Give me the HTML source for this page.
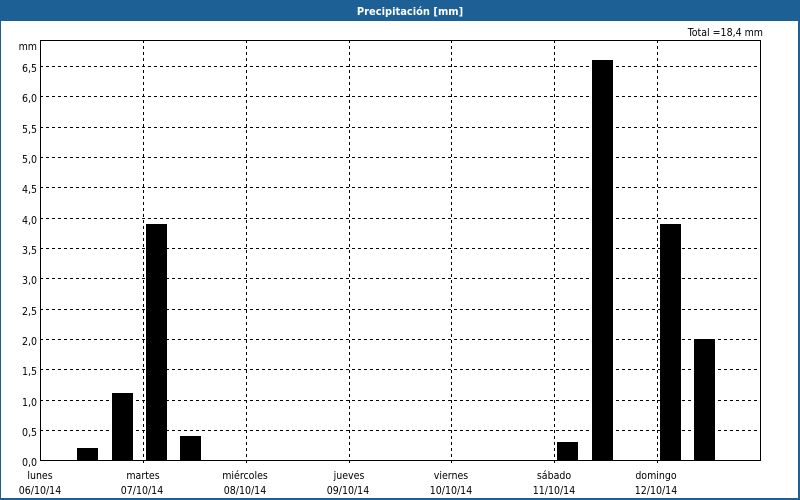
<!DOCTYPE html>
<html><head><meta charset="utf-8"><style>
html,body{margin:0;padding:0;background:#fff;}
svg{display:block;font-family:"DejaVu Sans Condensed","Liberation Sans",sans-serif;}
</style></head><body>
<svg width="800" height="500" viewBox="0 0 800 500" xmlns="http://www.w3.org/2000/svg">
<rect x="0" y="0" width="800" height="500" fill="#1d6096"/>
<rect x="1" y="21" width="797" height="477" fill="#fff"/>
<text x="410" y="15" fill="#fff" font-size="11" font-weight="bold" text-anchor="middle">Precipitación [mm]</text>
<text x="763" y="36" fill="#000" font-size="10.5" text-anchor="end">Total =18,4 mm</text>
<g stroke="#000" stroke-width="1" stroke-dasharray="3,3" fill="none">
<path d="M40 66.5H760M40 96.5H760M40 127.5H760M40 157.5H760M40 187.5H760M40 218.5H760M40 248.5H760M40 278.5H760M40 309.5H760M40 339.5H760M40 369.5H760M40 400.5H760M40 430.5H760"/>
<path d="M143.5 40V464M246.5 40V464M349.5 40V464M451.5 40V464M554.5 40V464M657.5 40V464"/>
</g>
<rect x="40.5" y="40.5" width="720" height="420" fill="none" stroke="#000"/>
<g fill="#000">
<rect x="77" y="448" width="21" height="13"/>
<rect x="112" y="393" width="21" height="68"/>
<rect x="146" y="224" width="21" height="237"/>
<rect x="180" y="436" width="21" height="25"/>
<rect x="557" y="442" width="21" height="19"/>
<rect x="592" y="60" width="21" height="401"/>
<rect x="660" y="224" width="21" height="237"/>
<rect x="694" y="339" width="21" height="122"/>
</g>
<g font-size="10.5" fill="#000" text-anchor="end">
<text x="37" y="50">mm</text>
<text x="37" y="72">6,5</text>
<text x="37" y="102">6,0</text>
<text x="37" y="133">5,5</text>
<text x="37" y="163">5,0</text>
<text x="37" y="193">4,5</text>
<text x="37" y="224">4,0</text>
<text x="37" y="254">3,5</text>
<text x="37" y="284">3,0</text>
<text x="37" y="315">2,5</text>
<text x="37" y="345">2,0</text>
<text x="37" y="375">1,5</text>
<text x="37" y="406">1,0</text>
<text x="37" y="436">0,5</text>
<text x="37" y="466">0,0</text>
</g>
<g font-size="10.5" fill="#000" text-anchor="middle">
<text x="40" y="479">lunes</text><text x="40" y="494">06/10/14</text>
<text x="143" y="479">martes</text><text x="142" y="494">07/10/14</text>
<text x="245" y="479">miércoles</text><text x="245" y="494">08/10/14</text>
<text x="349" y="479">jueves</text><text x="348" y="494">09/10/14</text>
<text x="451" y="479">viernes</text><text x="451" y="494">10/10/14</text>
<text x="554" y="479">sábado</text><text x="554" y="494">11/10/14</text>
<text x="656" y="479">domingo</text><text x="656" y="494">12/10/14</text>
</g>
</svg>
</body></html>
